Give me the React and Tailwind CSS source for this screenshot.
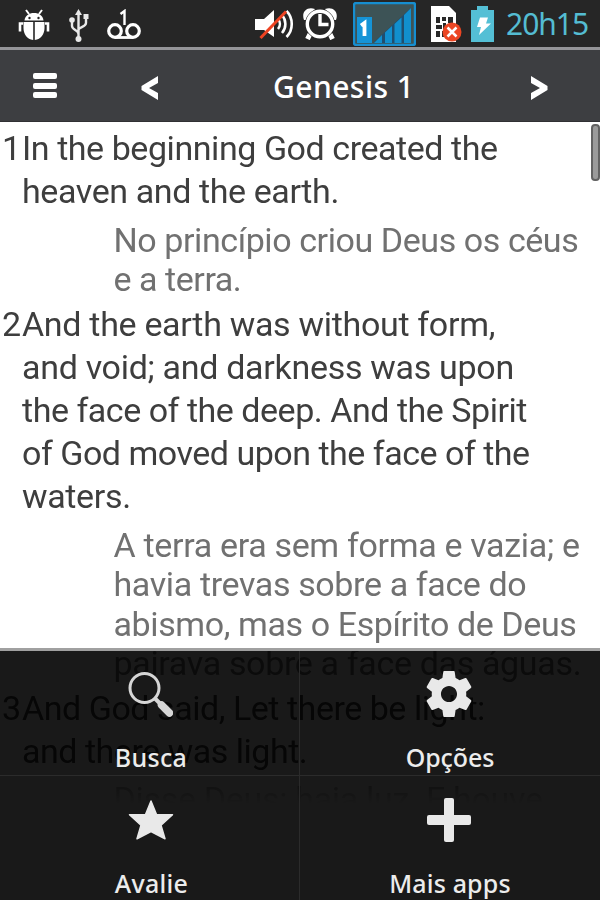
import React from 'react';

const verses = [
  {
    number: 1,
    en: [
      { text: 'In the beginning God created the', tracking: 'tracking-[-0.44px]' },
      { text: 'heaven and the earth.', tracking: 'tracking-[-0.4px]' },
    ],
    pt: [
      { text: 'No princípio criou Deus os céus', tracking: 'tracking-[-0.42px]' },
      { text: 'e a terra.', tracking: 'tracking-[-0.45px]' },
    ],
  },
  {
    number: 2,
    en: [
      { text: 'And the earth was without form,', tracking: 'tracking-[-0.31px]' },
      { text: 'and void; and darkness was upon', tracking: 'tracking-[-0.3px]' },
      { text: 'the face of the deep. And the Spirit', tracking: 'tracking-[-0.47px]' },
      { text: 'of God moved upon the face of the', tracking: 'tracking-[-0.48px]' },
      { text: 'waters.', tracking: 'tracking-[-0.35px]' },
    ],
    pt: [
      { text: 'A terra era sem forma e vazia; e', tracking: 'tracking-[-0.33px]' },
      { text: 'havia trevas sobre a face do', tracking: 'tracking-[-0.37px]' },
      { text: 'abismo, mas o Espírito de Deus', tracking: 'tracking-[-0.4px]' },
      { text: 'pairava sobre a face das águas.', tracking: 'tracking-[-0.34px]' },
    ],
  },
  {
    number: 3,
    en: [
      { text: 'And God said, Let there be light:', tracking: 'tracking-[-0.46px]' },
      { text: 'and there was light.', tracking: 'tracking-[-0.48px]' },
    ],
    pt: [{ text: 'Disse Deus: haja luz. E houve', tracking: 'tracking-[-0.3px]' }],
  },
];

const BugIcon = () => (
  <svg className="w-8 h-8" viewBox="0 0 32 32" fill="#fff">
    <path d="M8 1l3 4M24 1l-3 4" stroke="#fff" strokeWidth="2" />
    <path d="M6.500 11.500C7 6.500 11 4 16 4s9 2.500 9.500 7.500z" />
    <path d="M5.500 13h9.700v18C9 30.500 5.500 25 5.500 19zM16.800 13h9.700v6c0 6-3.500 11.500-9.700 12z" />
    <path d="M5 14.500H2v8M27 14.500h3v8" fill="none" stroke="#fff" strokeWidth="2.600" />
    <circle cx="11.500" cy="9" r="1.200" fill="#252525" />
    <circle cx="20.500" cy="9" r="1.200" fill="#252525" />
  </svg>
);

const UsbIcon = () => (
  <svg className="w-5 h-[34px]" viewBox="0 0 20 34" fill="none" stroke="#e8e8e8" strokeWidth="2.400">
    <path d="M9.500 5v24M9.500 25c0-4-6.500-4-6.500-8v-6M9.500 21c0-3 7.500-3 7.500-7V8" />
    <path d="M9.500 0l3.500 6H6z" fill="#e8e8e8" stroke="none" />
    <circle cx="9.500" cy="30" r="3" fill="#e8e8e8" stroke="none" />
    <circle cx="3" cy="11" r="2.800" fill="#e8e8e8" stroke="none" />
    <path d="M14.500 5h5v5h-5z" fill="#e8e8e8" stroke="none" />
  </svg>
);

const VoicemailIcon = () => (
  <svg className="w-9 h-8" viewBox="0 0 36 32" fill="none" stroke="#fff">
    <path d="M14.500 5l4-3v14" strokeWidth="2.400" />
    <circle cx="9" cy="22" r="6.300" strokeWidth="3.200" />
    <circle cx="27" cy="22" r="6.300" strokeWidth="3.200" />
    <path d="M9 28.500h18" strokeWidth="2.800" />
  </svg>
);

const MutedIcon = () => (
  <svg className="w-10 h-8" viewBox="0 0 40 32" fill="none">
    <path d="M0 11h9l10-9v27L9 22H0z" fill="#fff" />
    <path d="M23 11c2.500 3 2.500 7 0 10M27 7c4.500 5 4.500 13 0 18M31.500 3c7 7 7 19 0 26" stroke="#fff" strokeWidth="2.600" />
    <path d="M5.500 30L31 3.500" stroke="#ee4322" strokeWidth="3" />
  </svg>
);

const AlarmIcon = () => (
  <svg className="w-9 h-8" viewBox="0 0 36 32" fill="none" stroke="#fff">
    <path d="M8 26l-2.500 5M28 26l2.500 5" strokeWidth="5" />
    <path d="M2 12C-1 4 5-2 13 1L4 12zM34 12c3-8-3-14-11-11l9 11z" fill="#fff" stroke="none" />
    <circle cx="18" cy="16" r="14" fill="#252525" stroke="#252525" strokeWidth="2" />
    <circle cx="18" cy="16" r="12.700" strokeWidth="3.400" />
    <path d="M18 6V16.500h8.500" strokeWidth="3.400" />
  </svg>
);

const SignalIcon = () => (
  <svg className="w-[63px] h-11" viewBox="0 0 63 44">
    <rect x="1" y="1" width="61" height="42" rx="2" fill="#3d5356" stroke="#168ed0" strokeWidth="2.400" />
    <path d="M20 41L58 6v35z" fill="#1f4e70" />
    <rect x="4" y="15" width="15" height="26" fill="#1594d7" />
    <path d="M8 23.500l3.500-2.500V34" fill="none" stroke="#fff" strokeWidth="3.800" />
    <path d="M21 41l8-8v8zM32 30.500l7-6.500v17h-7zM41.500 22l7-6.500V41h-7zM51 13l7-7v35h-7z" fill="#118fce" />
  </svg>
);

const SimIcon = () => (
  <svg className="w-8 h-9" viewBox="0 0 32 36">
    <path d="M0 0h18l7 7v29H0z" fill="#fff" />
    <path d="M5 11h4v6H5zM11 11h4v4h-4zM17 11h5v6h-5zM5 19h6v4H5zM12 17h3v6h-3zM17 19h5v4h-5zM5 25h4v6H5zM11 25h4v6h-4z" fill="#292929" />
    <circle cx="21" cy="26" r="9.500" fill="#ec4623" />
    <path d="M16.500 21.500l9 9m0-9l-9 9" stroke="#fff" strokeWidth="2.500" />
  </svg>
);

const BatteryIcon = () => (
  <svg className="w-6 h-9" viewBox="0 0 24 36">
    <path d="M6 0h11v4h6v32H0V4h6z" fill="#54bfd5" />
    <path d="M9 11.500h8l-2 6h5L8 29l2-8H6z" fill="#fff" />
  </svg>
);

const SearchIcon = () => (
  <svg className="shrink-0 w-[46px] h-[46px]" viewBox="0 0 46 46" fill="none" stroke="#d6d6d6">
    <circle cx="17.500" cy="17" r="14.500" strokeWidth="3" />
    <path d="M28 27.500l5 5" strokeWidth="4" />
    <path d="M34.500 34l8 8" strokeWidth="7.500" strokeLinecap="round" />
  </svg>
);

const GearIcon = () => (
  <svg className="shrink-0 mr-[2px] w-[46px] h-[46px]" viewBox="2 2 20 20" fill="#e9e9e9">
    <path d="M19.430 12.980c.04-.32.07-.64.07-.98s-.03-.66-.07-.98l2.110-1.650c.19-.15.24-.42.12-.64l-2-3.460c-.12-.22-.39-.3-.61-.22l-2.490 1c-.52-.4-1.080-.73-1.690-.98l-.38-2.650C14.460 2.180 14.250 2 14 2h-4c-.25 0-.46.18-.49.42l-.38 2.650c-.61.25-1.170.59-1.690.98l-2.490-1c-.23-.09-.49 0-.61.22l-2 3.460c-.13.22-.07.49.12.64l2.110 1.650c-.04.32-.07.65-.07.98s.03.66.07.98l-2.110 1.650c-.19.15-.24.42-.12.64l2 3.460c.12.22.39.3.61.22l2.490-1c.52.4 1.080.73 1.690.98l.38 2.650c.03.24.24.42.49.42h4c.25 0 .46-.18.49-.42l.38-2.650c.61-.25 1.170-.59 1.690-.98l2.490 1c.23.09.49 0 .61-.22l2-3.460c.12-.22.07-.49-.12-.64l-2.110-1.650zM12 15.500c-1.930 0-3.500-1.570-3.500-3.500s1.570-3.500 3.500-3.500 3.500 1.570 3.500 3.500-1.570 3.500-3.500 3.500z" />
  </svg>
);

const StarIcon = () => (
  <svg className="shrink-0 ml-[2px] w-[46px] h-[46px]" viewBox="0 0 46 46" fill="#e9e9e9" stroke="#e9e9e9" strokeWidth="1.500" strokeLinejoin="round">
    <path d="M23 4l5.500 13.500 16 .3-11.500 10.500 4 13.500L23 34.500 9 41.800l4-13.500L1.500 17.800l16-.3z" />
  </svg>
);

const PlusIcon = () => (
  <svg className="shrink-0 mr-[3px] w-[46px] h-[46px]" viewBox="0 0 46 46" fill="#e9e9e9">
    <rect x="1" y="18" width="44" height="10" rx="2" />
    <rect x="18" y="1" width="10" height="44" rx="2" />
  </svg>
);

const menuItems = [
  { label: 'Busca', icon: SearchIcon, cell: 'pt-5 border-r border-b', text: 'mt-[23px] pl-[3px] tracking-[0.3px]' },
  { label: 'Opções', icon: GearIcon, cell: 'pt-5 border-b', text: 'mt-[23px] tracking-[-0.1px]' },
  { label: 'Avalie', icon: StarIcon, cell: 'pt-[21px] border-r', text: 'mt-[23px] pl-[4px] tracking-[0.3px]' },
  { label: 'Mais apps', icon: PlusIcon, cell: 'pt-[21px]', text: 'mt-[23px] tracking-[0.15px]' },
];

const StatusBar = () => (
  <div className="h-[47px] bg-[#262626] flex items-start shrink-0">
    <div className="flex pl-[18px] pt-[9px]">
      <BugIcon />
      <div className="ml-[19px]"><UsbIcon /></div>
      <div className="ml-[17px]"><VoicemailIcon /></div>
    </div>
    <div className="flex ml-auto pr-[11px]">
      <div className="pt-2"><MutedIcon /></div>
      <div className="pt-2 ml-[7px]"><AlarmIcon /></div>
      <div className="pt-[2px] ml-[15px]"><SignalIcon /></div>
      <div className="pt-[6px] ml-[15px]"><SimIcon /></div>
      <div className="pt-[6px] ml-[8px]"><BatteryIcon /></div>
      <span className="ml-[11px] mt-[4px] w-[83px] text-[30px] leading-[40px] tracking-[-1px] text-[#54bcd2] font-['Noto_Sans'] whitespace-nowrap">
        20h15
      </span>
    </div>
  </div>
);

const Header = () => (
  <div className="h-[75px] bg-[#3d3e41] border-t-[3px] border-[#949498] border-b border-b-[#303033] flex items-center shrink-0 text-white">
    <div className="ml-[33px] w-6 h-[25px] flex flex-col justify-between">
      <span className="h-[6px] rounded-[2px] bg-white" />
      <span className="h-[6px] rounded-[2px] bg-white" />
      <span className="h-[6px] rounded-[2px] bg-white" />
    </div>
    <svg className="ml-[84px] mt-[4px] w-[18px] h-6" viewBox="0 0 18 24" fill="#fff">
      <path d="M17 0v7L8 12l9 5v7L.5 14v-4z" />
    </svg>
    <h1 className="ml-[114px] mt-[2px] w-[142px] text-[30px] leading-[40px] tracking-[0.45px] font-medium font-['Noto_Sans'] whitespace-nowrap">Genesis 1</h1>
    <svg className="ml-[115px] mt-[4px] w-[18px] h-6" viewBox="0 0 18 24" fill="#fff">
      <path d="M1 0v7l9 5-9 5v7l16.500-10v-4z" />
    </svg>
  </div>
);

export default function App() {
  return (
    <div className="relative w-[600px] h-[900px] overflow-hidden bg-white flex flex-col font-['Roboto',sans-serif]">
      <StatusBar />
      <Header />

      <div className="h-[683px] overflow-hidden pt-[5px] text-[34px] whitespace-nowrap [mask-image:linear-gradient(to_bottom,#000_650px,transparent_683px)]">
        {verses.map((verse) => (
          <div key={verse.number} className="mb-[3px]">
            <div className="flex text-[#3e3e3e] leading-[43.2px]">
              <span className="w-[22px] pl-[2px] shrink-0">{verse.number}</span>
              <div>
                {verse.en.map((line) => (
                  <p key={line.text} className={line.tracking}>{line.text}</p>
                ))}
              </div>
            </div>
            <div className="mt-[7.2px] ml-[113.5px] text-[#717171] leading-[39.5px]">
              {verse.pt.map((line) => (
                <p key={line.text} className={line.tracking}>{line.text}</p>
              ))}
            </div>
          </div>
        ))}
      </div>

      {/* scroll thumb */}
      <div className="absolute right-0 top-[124px] w-[9px] h-[57px] rounded-[4px] border-2 border-[#626262] bg-[#9a9a9a]" />

      {/* options menu over the text */}
      <div className="absolute inset-x-0 top-[648px] h-[252px] border-t-[3px] border-[#a0a0a0] bg-black/90 bg-clip-padding grid grid-cols-2 grid-rows-[125px_124px]">
        {menuItems.map(({ label, icon: Icon, cell, text }) => (
          <div key={label} className={`flex flex-col items-center border-[#2b2b2b] ${cell}`}>
            <Icon />
            <span className={`text-[25px] leading-[34px] font-medium text-[#ececec] font-['Noto_Sans'] ${text}`}>{label}</span>
          </div>
        ))}
      </div>
    </div>
  );
}
